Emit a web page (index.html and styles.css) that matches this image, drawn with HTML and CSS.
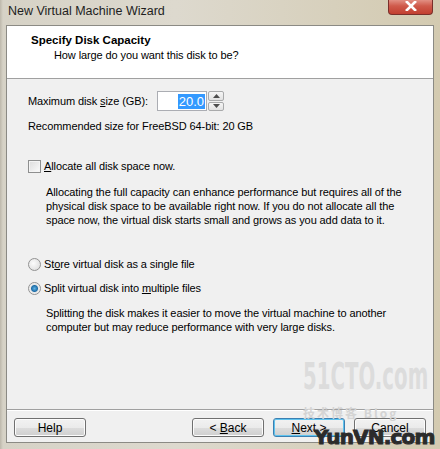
FILE: index.html
```html
<!DOCTYPE html>
<html lang="en">
<head>
<meta charset="UTF-8">
<title>New Virtual Machine Wizard</title>
<link rel="stylesheet" href="styles.css">
</head>
<body>

<div class="window">
  <div class="titlebar">
    <span class="title">New Virtual Machine Wizard</span>
    <div class="close">
      <svg width="14" height="10" viewBox="0 0 14 10"><path d="M2 0 L12 10 M12 0 L2 10" stroke="#fff" stroke-width="2.6"/></svg>
    </div>
  </div>

  <div class="client">
    <!-- HEADER -->
    <div class="wiz-header">
      <div class="wiz-title">Specify Disk Capacity</div>
      <div class="wiz-sub">How large do you want this disk to be?</div>
    </div>

    <!-- BODY -->
    <div class="wiz-body">
      <div class="size-row">
        <span class="size-label">Maximum disk <u>s</u>ize (GB):</span>
        <div class="spin">
          <div class="spin-box"><span class="sel">20.0</span></div>
          <div class="spin-btns">
            <div class="spin-btn"><svg width="7" height="4" viewBox="0 0 7 4"><path d="M0 4 L3.5 0 L7 4Z" fill="#4d4d4d"/></svg></div>
            <div class="spin-btn"><svg width="7" height="4" viewBox="0 0 7 4"><path d="M0 0 L3.5 4 L7 0Z" fill="#4d4d4d"/></svg></div>
          </div>
        </div>
      </div>
      <div class="recommend">Recommended size for FreeBSD 64-bit: 20 GB</div>

      <div class="option check-row">
        <span class="checkbox"></span>
        <span><u>A</u>llocate all disk space now.</span>
      </div>
      <p class="note">Allocating the full capacity can enhance performance but requires all of the<br>physical disk space to be available right now. If you do not allocate all the<br>space now, the virtual disk starts small and grows as you add data to it.</p>

      <div class="option radio-one">
        <span class="radio"></span>
        <span>St<u>o</u>re virtual disk as a single file</span>
      </div>
      <div class="option radio-two">
        <span class="radio on"></span>
        <span>Split virtual disk into <u>m</u>ultiple files</span>
      </div>
      <p class="note note-split">Splitting the disk makes it easier to move the virtual machine to another<br>computer but may reduce performance with very large disks.</p>
    </div>

    <!-- FOOTER -->
    <div class="wiz-footer">
      <button class="btn">Help</button>
      <div class="spacer"></div>
      <button class="btn">&lt; <u>B</u>ack</button>
      <button class="btn default"><u>N</u>ext &gt;</button>
      <button class="btn">Cancel</button>
    </div>
  </div>

  <!-- watermarks -->
  <div class="wm wm-51">51CTO.com</div>
  <div class="wm wm-blog">技术博客 Blog</div>
  <div class="wm wm-yun">YunVN.com</div>
</div>

</body>
</html>
```

FILE: styles.css
```css
body {
  margin: 0;
  font-family: "Liberation Sans", "Noto Sans CJK SC", sans-serif;
  font-size: 11px;
  letter-spacing: -0.1px;
  color: #000;
  background: #d2ccbc;
}

.window {
  position: relative;
  width: 440px;
  height: 449px;
  overflow: hidden;
  display: flex;
  flex-direction: column;
  background: linear-gradient(90deg, #bdb8ab 0, #d6d2c6 3px, #ddd9ce 40%, #d3cab0 100%);
}

/* TITLE BAR */
.titlebar {
  height: 25px;
  display: flex;
  align-items: flex-start;
  flex-shrink: 0;
}

.title {
  margin: 4px 0 0 8px;
  font-size: 12.5px;
  letter-spacing: 0;
  color: #1e1e1e;
}

.close {
  margin: -2px 7px 0 auto;
  width: 45px;
  height: 17px;
  border: 1px solid #7a2f2a;
  border-top: none;
  border-radius: 0 0 4px 4px;
  background: linear-gradient(#e8a196, #cf5a4b 50%, #c23f30);
  display: flex;
  align-items: center;
  justify-content: center;
  box-sizing: border-box;
}

/* CLIENT AREA */
.client {
  flex: 1;
  margin: 0 6px 6px 6px;
  border: 1px solid #8b8a84;
  background: #f0f0f0;
  display: flex;
  flex-direction: column;
}

.wiz-header {
  height: 53px;
  background: #fff;
  border-bottom: 1px solid #a0a0a0;
  padding: 7px 0 0 24px;
  box-sizing: border-box;
}

.wiz-title {
  font-weight: bold;
  font-size: 11.5px;
  letter-spacing: 0;
  line-height: 15px;
}

.wiz-sub {
  line-height: 15px;
  padding-left: 23px;
}

.wiz-body {
  flex: 1;
  padding: 12px 0 0 21px;
}

.size-row {
  display: flex;
  align-items: center;
  height: 20px;
}

.size-label {
  width: 129px;
  flex-shrink: 0;
  white-space: nowrap;
}

.spin {
  display: flex;
  height: 20px;
}

.spin-box {
  width: 50px;
  border: 1px solid #abadb3;
  background: #fff;
  box-sizing: border-box;
  display: flex;
  align-items: center;
  justify-content: flex-end;
  padding-right: 1px;
}

.sel {
  background: #3399ff;
  color: #fff;
  font-size: 13px;
  letter-spacing: 0;
  line-height: 15px;
  padding: 0 1px;
}

.spin-btns {
  width: 16px;
  display: flex;
  flex-direction: column;
  gap: 1px;
  margin-left: 1px;
}

.spin-btn {
  flex: 1;
  border: 1px solid #a9aaab;
  border-radius: 2px;
  background: linear-gradient(#f6f6f6, #e2e2e2);
  display: flex;
  align-items: center;
  justify-content: center;
}

.recommend {
  margin-top: 8px;
  line-height: 14px;
}

.option {
  display: flex;
  align-items: center;
  height: 14px;
  gap: 3px;
  white-space: nowrap;
}

.check-row { margin-top: 26px; }
.radio-one { margin-top: 30px; }
.radio-two { margin-top: 10px; }

.checkbox {
  width: 13px;
  height: 13px;
  box-sizing: border-box;
  border: 1px solid #8e8f8f;
  background: linear-gradient(135deg, #dcdcdc, #fbfbfb);
  box-shadow: inset 0 0 0 1px #f4f4f4;
}

.radio {
  width: 13px;
  height: 13px;
  box-sizing: border-box;
  border-radius: 50%;
  border: 1px solid #929292;
  background: radial-gradient(circle at 40% 40%, #fcfcfc, #d8d8d8);
}

.radio.on {
  background: radial-gradient(circle, #5fb3e6 0, #1f6ea8 3px, #e6e6e6 4px, #f4f4f4 6px);
}

.note {
  margin: 12px 0 0 18px;
  line-height: 14px;
  white-space: nowrap;
}

.note-split { margin-top: 11px; }

/* FOOTER */
.wiz-footer {
  height: 33px;
  border-top: 1px solid #a0a0a0;
  box-shadow: inset 0 1px 0 #fff;
  display: flex;
  align-items: flex-start;
  padding: 8px 7px 0 7px;
  box-sizing: border-box;
  gap: 9px;
}

.spacer { flex: 1; }

.btn {
  width: 72px;
  height: 19px;
  padding: 0;
  font-family: inherit;
  font-size: 12px;
  letter-spacing: 0;
  color: #000;
  border: 1px solid #707070;
  border-radius: 3px;
  background: linear-gradient(#f2f2f2 0, #ebebeb 50%, #dddddd 51%, #cfcfcf 100%);
  box-shadow: inset 0 0 0 1px #fcfcfc;
}

.btn.default {
  border-color: #3c7fb1;
  box-shadow: inset 0 0 0 1px #5fc3ee;
}

/* WATERMARKS */
.wm {
  position: absolute;
  white-space: nowrap;
  font-family: "DejaVu Sans", sans-serif;
  font-weight: bold;
  letter-spacing: 0;
}

.wm-51 {
  left: 303px;
  top: 354px;
  font-size: 38px;
  color: #dcdcdc;
  transform: scaleX(0.52);
  transform-origin: left;
}

.wm-blog {
  left: 303px;
  top: 404px;
  font-family: "Noto Sans CJK SC", sans-serif;
  font-size: 12px;
  color: #d4d4d4;
  letter-spacing: 2px;
}

.wm-yun {
  left: 314px;
  top: 425px;
  font-size: 20px;
  color: #2b2b2b;
  -webkit-text-stroke: 1px #2b2b2b;
  letter-spacing: -0.8px;
}
```
